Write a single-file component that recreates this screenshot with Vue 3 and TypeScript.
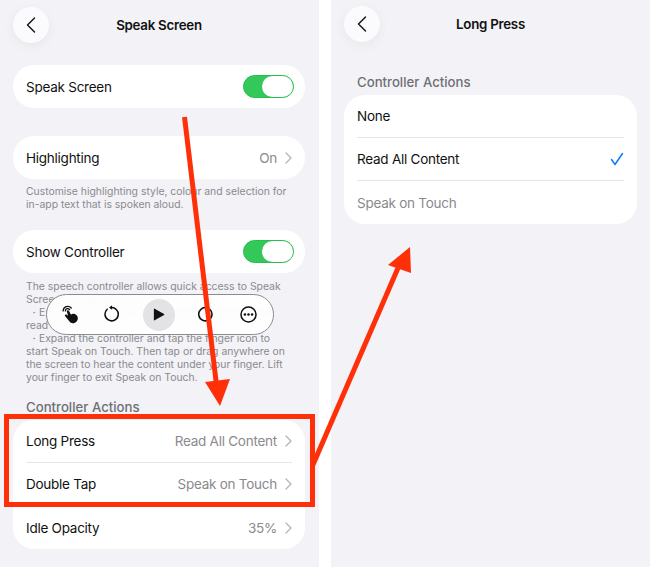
<script setup lang="ts">
const actionRows = [
  { label: 'Long Press', value: 'Read All Content' },
  { label: 'Double Tap', value: 'Speak on Touch' },
  { label: 'Idle Opacity', value: '35%' },
]
</script>

<template>
  <div class="page">
    <section class="panel left">
      <header class="head">
        <button class="back" aria-label="Back">
          <svg width="12" height="18" viewBox="0 0 12 18"><path d="M9.5 2 2.5 9l7 7" fill="none" stroke="#111" stroke-width="1.4" stroke-linecap="round" stroke-linejoin="round"/></svg>
        </button>
        <h1>Speak Screen</h1>
      </header>

      <div class="card row first">
        <span>Speak Screen</span>
        <span class="toggle"><i></i></span>
      </div>

      <div class="card row second">
        <span>Highlighting</span>
        <span class="val">On<svg class="chev" width="7" height="12" viewBox="0 0 7 12"><path d="m1 1 5 5-5 5" /></svg></span>
      </div>
      <p class="note n1">Customise highlighting style, colour and selection for<br>in-app text that is spoken aloud.</p>

      <div class="card row third">
        <span>Show Controller</span>
        <span class="toggle"><i></i></span>
      </div>
      <p class="note n2">The speech controller allows quick access to Speak<br>Screen and Speak on Touch.<br>&nbsp;・Expand the controller and tap the play button to<br>read the content.<br>&nbsp;・Expand the controller and tap the finger icon to<br>start Speak on Touch. Then tap or drag anywhere on<br>the screen to hear the content under your finger. Lift<br>your finger to exit Speak on Touch.</p>

      <h2 class="section s1">Controller Actions</h2>
      <div class="card list">
        <div v-for="r in actionRows" :key="r.label" class="item">
          <span>{{ r.label }}</span>
          <span class="val">{{ r.value }}<svg class="chev" width="7" height="12" viewBox="0 0 7 12"><path d="m1 1 5 5-5 5" /></svg></span>
        </div>
      </div>
    </section>

    <section class="panel right">
      <header class="head">
        <button class="back" aria-label="Back">
          <svg width="12" height="18" viewBox="0 0 12 18"><path d="M9.5 2 2.5 9l7 7" fill="none" stroke="#111" stroke-width="1.4" stroke-linecap="round" stroke-linejoin="round"/></svg>
        </button>
        <h1>Long Press</h1>
      </header>
      <h2 class="section s2">Controller Actions</h2>
      <div class="card list">
        <div class="item"><span>None</span></div>
        <div class="item">
          <span>Read All Content</span>
          <svg width="14" height="14" viewBox="0 0 14 14"><path d="M1.5 7.5 5 12.5 12.5 1.5" fill="none" stroke="#0a7aff" stroke-width="1.5" stroke-linecap="round" stroke-linejoin="round"/></svg>
        </div>
        <div class="item muted"><span>Speak on Touch</span></div>
      </div>
    </section>

    <div class="controller">
      <svg class="ic hand" width="17" height="20" viewBox="0 0 22 24">
        <path d="M1.5 8a6 6 0 0 1 10.5-3.8" fill="none" stroke="#111" stroke-width="1.7" stroke-linecap="round"/>
        <path d="M4.4 8a3 3 0 0 1 5.4-1.8" fill="none" stroke="#111" stroke-width="1.7" stroke-linecap="round"/>
        <path d="M6.2 8.6a1.5 1.5 0 0 1 2.9-.6l2.4 4.6 1.2-.4c2.2-.7 4-.4 5.4.7 1.8 1.3 2.6 3 2.4 4.9-.2 2.8-1.8 4.9-4.4 5.7-2.6.8-5 .2-6.4-1.8L3.9 14.7c-.6-1 0-2 1.1-2 .8 0 1.7.5 2.9 1.9L6.2 8.6Z" fill="#111"/>
      </svg>
      <svg class="ic replay" width="17" height="17" viewBox="0 0 20 20">
        <path d="M8 3.1A7.8 7.8 0 1 1 3.8 5" fill="none" stroke="#111" stroke-width="1.8" stroke-linecap="round"/>
        <path d="M9.5.2v5.4L5.9 3Z" fill="#111"/>
      </svg>
      <span class="play"><svg width="12" height="13" viewBox="0 0 14 15"><path d="M1 1.2v12.6a.6.6 0 0 0 .9.5l11-6.3a.6.6 0 0 0 0-1L1.9.7A.6.6 0 0 0 1 1.2Z" fill="#111"/></svg></span>
      <svg class="ic forward" width="17" height="17" viewBox="0 0 20 20">
        <path d="M12 3.1A7.8 7.8 0 1 0 16.2 5" fill="none" stroke="#111" stroke-width="1.8" stroke-linecap="round"/>
        <path d="M10.5.2v5.4L14.1 3Z" fill="#111"/>
      </svg>
      <svg class="ic more" width="17" height="17" viewBox="0 0 19 19">
        <circle cx="9.5" cy="9.5" r="8.4" fill="none" stroke="#111" stroke-width="1.7"/>
        <circle cx="5.5" cy="9.5" r="1.4" fill="#111"/><circle cx="9.5" cy="9.5" r="1.4" fill="#111"/><circle cx="13.5" cy="9.5" r="1.4" fill="#111"/>
      </svg>
    </div>

    <div class="marker"></div>
    <svg class="arrows" width="650" height="567" viewBox="0 0 650 567">
      <path d="M184.5 117 216.5 385" stroke="#ff3008" stroke-width="5" fill="none"/>
      <path d="M205 382 230 379 220 406Z" fill="#ff3008"/>
      <path d="M312 467 398 268" stroke="#ff3008" stroke-width="5" fill="none"/>
      <path d="M388 265 411 273 410 247Z" fill="#ff3008"/>
    </svg>
  </div>
</template>

<style>
html, body { margin: 0; background: #fff; }
</style>

<style scoped>
.page {
  position: relative;
  width: 650px;
  height: 567px;
  display: flex;
  gap: 12px;
  overflow: hidden;
  background: #fff;
  font-family: Inter, "Noto Sans", sans-serif;
  font-size: 13.5px;
  letter-spacing: -0.25px;
  color: #111;
}
.panel {
  width: 319px;
  height: 567px;
  box-sizing: border-box;
  background: #f2f2f7;
  flex: none;
}
.left { padding: 7px 14px 0 13px; }
.right { padding: 7px 13px 0 13px; }
.head {
  position: relative;
  height: 36px;
  display: flex;
  align-items: center;
  justify-content: center;
}
.right .head { top: -1px; }
.back {
  position: absolute;
  left: 0;
  top: 0;
  width: 36px;
  height: 36px;
  padding: 0;
  border: 0;
  border-radius: 50%;
  background: #fbfbfd;
  box-shadow: 0 3px 12px rgba(0, 0, 0, .05);
  display: flex;
  align-items: center;
  justify-content: center;
}
h1 { margin: 0; font-size: 13.3px; font-weight: 600; }
.card { background: #fff; }
.row {
  height: 43px;
  border-radius: 21px;
  padding: 0 11px 0 13px;
  display: flex;
  align-items: center;
  justify-content: space-between;
}
.first { margin-top: 22px; }
.second { margin-top: 28px; padding-right: 13px; }
.third { margin-top: 19px; }
.toggle {
  width: 51px;
  height: 23px;
  box-sizing: border-box;
  border-radius: 12px;
  background: #34c759;
  border: 1px solid #26c04f;
  display: flex;
  justify-content: flex-end;
}
.toggle i {
  width: 31px;
  height: 21px;
  border-radius: 11px;
  background: #fff;
}
.val {
  display: flex;
  align-items: center;
  gap: 8px;
  color: #8a8a8e;
}
.chev { flex: none; }
.chev path { fill: none; stroke: #b4b4b8; stroke-width: 1.3; stroke-linecap: round; stroke-linejoin: round; }
.note {
  margin: 0;
  padding: 0 13px;
  font-size: 10.4px;
  line-height: 13px;
  letter-spacing: 0;
  white-space: nowrap;
  color: #8a8a8e;
}
.n1 { margin-top: 6px; }
.n2 { margin-top: 7px; }
.section {
  margin: 0;
  padding: 0 13px;
  font-size: 13.2px;
  line-height: 16px;
  letter-spacing: 0;
  font-weight: 500;
  color: #6f6f74;
}
.s1 { margin-top: 15px; margin-bottom: 5px; }
.s2 { margin-top: 31px; margin-bottom: 5px; }
.list { border-radius: 21px; padding: 0 13px; }
.item {
  height: 43px;
  box-sizing: border-box;
  display: flex;
  align-items: center;
  justify-content: space-between;
  border-bottom: 1px solid #e5e5ea;
}
.item:last-child { border-bottom: 0; }
.muted { color: #8a8a8e; }
.controller {
  position: absolute;
  left: 46px;
  top: 294px;
  width: 228px;
  height: 41px;
  box-sizing: border-box;
  border: 1.5px solid #8c8c8c;
  border-radius: 21px;
  background: rgba(255, 255, 255, .92);
  backdrop-filter: blur(4px);
}
.ic, .play { position: absolute; }
.hand { left: 14.5px; top: 9px; }
.replay { left: 56.5px; top: 10px; }
.play {
  left: 95.5px;
  top: 3.5px;
  width: 32px;
  height: 32px;
  border-radius: 50%;
  background: #e3e3e5;
  display: flex;
  align-items: center;
  justify-content: center;
  padding-left: 1px;
  box-sizing: border-box;
}
.forward { left: 149px; top: 10px; }
.more { left: 193px; top: 11px; }
.marker {
  position: absolute;
  left: 4px;
  top: 414px;
  width: 311px;
  height: 93px;
  box-sizing: border-box;
  border: 5px solid #ff3008;
}
.arrows { position: absolute; left: 0; top: 0; pointer-events: none; }
</style>
